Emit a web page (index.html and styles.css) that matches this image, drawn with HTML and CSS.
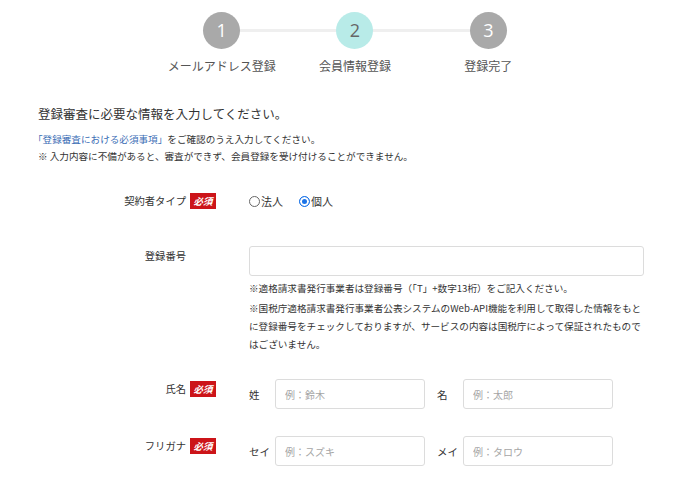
FILE: index.html
```html
<!DOCTYPE html>
<html lang="ja">
<head>
<meta charset="utf-8">
<title>会員情報登録</title>
<link rel="stylesheet" href="styles.css">
</head>
<body>
<div class="steps">
  <div class="step">
    <div class="circle">1</div>
    <div class="step-label">メールアドレス登録</div>
  </div>
  <div class="step">
    <div class="circle current">2</div>
    <div class="step-label">会員情報登録</div>
  </div>
  <div class="step">
    <div class="circle">3</div>
    <div class="step-label">登録完了</div>
  </div>
</div>

<div class="intro">
  <p class="lead">登録審査に必要な情報を入力してください。</p>
  <p class="sub"><a class="link" href="#">「登録審査における必須事項」</a>をご確認のうえ入力してください。</p>
  <p class="sub">※ 入力内容に不備があると、審査ができず、会員登録を受け付けることができません。</p>
</div>

<div class="form">
  <div class="row row-type">
    <div class="label">契約者タイプ</div>
    <div class="badge-cell"><span class="badge">必須</span></div>
    <div class="field radios">
      <label class="radio"><span class="dot"></span>法人</label>
      <label class="radio"><span class="dot checked"></span>個人</label>
    </div>
  </div>

  <div class="row row-number">
    <div class="label label-top">登録番号</div>
    <div class="badge-cell"></div>
    <div class="field">
      <input class="input wide" type="text">
      <p class="note">※適格請求書発行事業者は登録番号（「T」+数字13桁）をご記入ください。</p>
      <p class="note note-2">※国税庁適格請求書発行事業者公表システムのWeb-API機能を利用して取得した情報をもとに登録番号をチェックしておりますが、サービスの内容は国税庁によって保証されたものではございません。</p>
    </div>
  </div>

  <div class="row row-name">
    <div class="label label-top">氏名</div>
    <div class="badge-cell top"><span class="badge">必須</span></div>
    <div class="field pair">
      <span class="sublabel">姓</span>
      <input class="input half" type="text" placeholder="例：鈴木">
      <span class="sublabel second">名</span>
      <input class="input half" type="text" placeholder="例：太郎">
    </div>
  </div>

  <div class="row row-kana">
    <div class="label label-top">フリガナ</div>
    <div class="badge-cell top"><span class="badge">必須</span></div>
    <div class="field pair">
      <span class="sublabel">セイ</span>
      <input class="input half" type="text" placeholder="例：スズキ">
      <span class="sublabel second">メイ</span>
      <input class="input half" type="text" placeholder="例：タロウ">
    </div>
  </div>
</div>
</body>
</html>
```

FILE: styles.css
```css
* { box-sizing: border-box; }

body {
  margin: 0;
  background: #fff;
  color: #333;
  font-family: "Noto Sans CJK JP", "Noto Sans", sans-serif;
}

p { margin: 0; }

/* steps */
.steps {
  position: relative;
  display: flex;
  width: 400px;
  margin-left: 155px;
  padding-top: 12px;
}

.steps::before {
  content: "";
  position: absolute;
  left: 67px;
  right: 67px;
  top: 29px;
  height: 3px;
  background: #efefef;
}

.step {
  position: relative;
  flex: 1;
  display: flex;
  flex-direction: column;
  align-items: center;
}

.circle {
  width: 37px;
  height: 37px;
  border-radius: 50%;
  background: #a9a9a9;
  color: #fff;
  font-size: 18px;
  line-height: 37px;
  text-align: center;
  font-family: "Open Sans", "Noto Sans", sans-serif;
}

.circle.current {
  background: #b8ebe8;
  color: #666;
}

.step-label {
  margin-top: 8px;
  font-size: 12px;
  line-height: 17px;
  color: #555;
  white-space: nowrap;
}

/* intro */
.intro {
  margin-top: 31px;
  padding-left: 38px;
}

.lead {
  font-size: 12.5px;
  line-height: 18px;
  color: #333;
}

.sub {
  font-size: 9.6px;
  line-height: 17px;
  color: #333;
}

.lead + .sub { margin-top: 8px; }

.link {
  color: #3a6db5;
  text-decoration: none;
  margin-left: -5px;
}

/* form */
.form {
  margin-top: 27px;
}

.row {
  display: grid;
  grid-template-columns: 186px 63px 395px;
  align-items: start;
}

.label {
  text-align: right;
  font-size: 10.3px;
  line-height: 18px;
  color: #333;
}

.label-top { padding-top: 1px; }

.badge-cell {
  padding-left: 4px;
  height: 18px;
  display: flex;
  align-items: center;
}

.badge-cell.top { margin-top: 1px; }

.badge {
  display: inline-block;
  width: 26px;
  height: 16px;
  background: #cc1419;
  color: #fff;
  font-size: 9.5px;
  line-height: 16px;
  text-align: center;
  font-weight: 700;
  font-style: italic;
}

.row-type {
  align-items: center;
}

.radios {
  display: flex;
  align-items: center;
  gap: 16px;
  height: 18px;
}

.radio {
  display: flex;
  align-items: center;
  font-size: 11px;
  color: #333;
  line-height: 18px;
}

.dot {
  width: 11px;
  height: 11px;
  border: 1px solid #666;
  border-radius: 50%;
  margin-right: 1px;
  background: #fff;
}

.dot.checked {
  border-color: #1a73e8;
  box-shadow: inset 0 0 0 2px #fff;
  background: #1a73e8;
}

.row-number { margin-top: 36px; }

.input {
  display: block;
  height: 30px;
  border: 1px solid #dcdcdc;
  border-radius: 3px;
  background: #fff;
  padding: 0 9px;
  font-family: "Noto Sans CJK JP", "Noto Sans", sans-serif;
  font-size: 10px;
  color: #333;
  outline: none;
}

.input::placeholder { color: #a5a5a5; }

.wide { width: 395px; }

.note {
  margin-top: 3px;
  font-size: 9.6px;
  line-height: 18px;
  color: #333;
}

.note-2 { margin-top: 2px; }

.row-name { margin-top: 26px; }
.row-kana { margin-top: 27px; }

.pair {
  display: flex;
  align-items: center;
}

.sublabel {
  width: 26px;
  font-size: 10.5px;
  color: #333;
}

.sublabel.second { margin-left: 12px; }

.half { width: 150px; }
```
